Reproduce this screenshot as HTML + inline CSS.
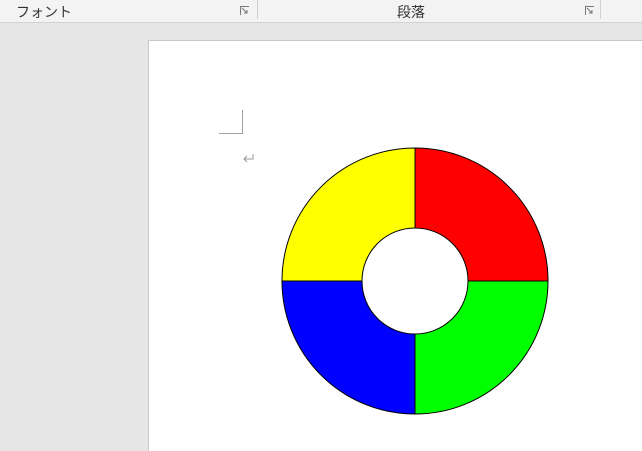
<!DOCTYPE html>
<html><head><meta charset="utf-8"><style>
body{margin:0;width:642px;height:442px;overflow:hidden;background:#e6e6e6;font-family:"Liberation Sans","Noto Sans CJK JP",sans-serif;position:relative}
.bar{position:absolute;left:0;top:0;width:642px;height:22px;background:#f3f3f3;border-bottom:1px solid #d2d2d2}
.t{position:absolute;top:2px;font-size:14px;color:#333}
.sep{position:absolute;top:0;width:1px;height:19px;background:#d0d0d0}
.page{position:absolute;left:148px;top:40px;width:500px;height:410px;background:#fff;border-left:1px solid #c8c8c8;border-top:1px solid #c8c8c8}
</style></head><body>
<div class="bar">
<span class="t" style="left:16px">フォント</span>
<div class="sep" style="left:257px"></div>
<span class="t" style="left:397px">段落</span>
<div class="sep" style="left:600px"></div>
</div>
<div class="page"></div>
<svg width="642" height="442" style="position:absolute;left:0;top:0">
<g fill="none" stroke="#777" stroke-width="1">
<path d="M240.5 15V6.5H249"/><path d="M242 8l5 5M247 10v3h-3"/>
<path d="M585.5 15V6.5H594"/><path d="M587 8l5 5M592 10v3h-3"/>
</g>
<path d="M242.5 110V133.5H219" fill="none" stroke="#a0a0a0"/>
<path d="M253 154v5h-9M247 156l-3 3 3 3" fill="none" stroke="#999"/>
<g stroke="#000" stroke-width="1">
<path d="M415 281V148A133 133 0 0 1 548 281Z" fill="#ff0000"/>
<path d="M415 281H548A133 133 0 0 1 415 414Z" fill="#00ff00"/>
<path d="M415 281V414A133 133 0 0 1 282 281Z" fill="#0000ff"/>
<path d="M415 281H282A133 133 0 0 1 415 148Z" fill="#ffff00"/>
<circle cx="415" cy="281" r="53" fill="#fff"/>
</g>
</svg>
</body></html>
